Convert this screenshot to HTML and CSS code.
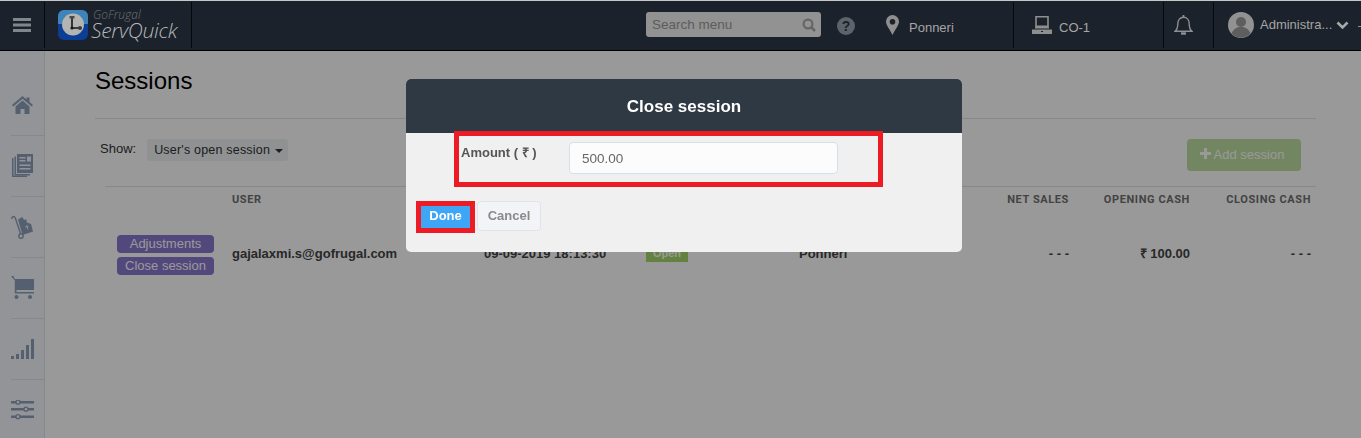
FILE: index.html
```html
<!DOCTYPE html>
<html lang="en">
<head>
    <meta charset="UTF-8">
    <meta name="viewport" content="width=device-width, initial-scale=1.0">
    <title>Sessions</title>
    <link rel="stylesheet" href="styles.css">
</head>
<body>
    <header class="topbar">
        <div class="menu-btn">
            <svg width="18" height="14" viewBox="0 0 18 14"><path d="M0 0h18v3H0zM0 5.500h18v3H0zM0 11h18v3H0z" fill="#80868a"/></svg>
        </div>
        <div class="brand">
            <svg class="brand-icon" width="30" height="30" viewBox="0 0 30 30">
                <rect width="30" height="30" rx="6" fill="#0b3f96"/>
                <path d="M6 0h18a6 6 0 0 1 6 6v8H0V6a6 6 0 0 1 6-6z" fill="#3f84b8"/>
                <circle cx="15" cy="14.500" r="11" fill="#b4b4b2"/>
                <path d="M14 8v10h7" stroke="#15181c" stroke-width="1.600" fill="none"/>
                <path d="M11.500 6h5v2.500h-5z" fill="#4a4a4a"/>
                <circle cx="14" cy="18" r="1.600" fill="#15181c"/>
                <circle cx="22" cy="18" r="2" fill="#3c3c3c"/>
            </svg>
            <div class="brand-text">
                <span class="brand-top">GoFrugal</span>
                <span class="brand-name">ServQuick</span>
            </div>
        </div>
        <div class="top-right">
            <div class="search">
                <span>Search menu</span>
                <svg width="14" height="14" viewBox="0 0 14 14"><circle cx="6" cy="6" r="4.400" fill="none" stroke="#666" stroke-width="2.200"/><path d="M9 9l4 4" stroke="#666" stroke-width="2.600"/></svg>
            </div>
            <div class="help">?</div>
            <div class="top-item location">
                <svg width="13" height="20" viewBox="0 0 13 20"><path fill-rule="evenodd" d="M6.500 0a6.500 6.500 0 0 1 6.500 6.500c0 4-4 8-6.500 13.500C4 14.500 0 10.500 0 6.500A6.500 6.500 0 0 1 6.500 0zm0 4a2.800 2.800 0 1 0 0 5.600 2.800 2.800 0 0 0 0-5.600z" fill="#8f8f8f"/></svg>
                <span>Ponneri</span>
            </div>
            <div class="top-item counter">
                <svg width="20" height="18" viewBox="0 0 20 18" fill="none"><path d="M4 .800h12v9.400H4z" stroke="#8f8f8f" stroke-width="1.600"/><path d="M3 11h14v1.500H3z" fill="#8f8f8f"/><path d="M0 13.500h20V18H0z" fill="#8f8f8f"/><path d="M9 15h2v1H9z" fill="#1b222b"/></svg>
                <span>CO-1</span>
            </div>
            <div class="top-item bell">
                <svg width="19" height="20" viewBox="0 0 19 20" fill="none" stroke="#8f8f8f" stroke-width="1.400"><path d="M1 16.300c2.500-2 2.800-4.300 2.800-7.500C3.800 5 6 2.300 9.500 2.300s5.700 2.700 5.700 6.500c0 3.200.3 5.500 2.800 7.500z"/><path d="M9.500 0v2.500" stroke-width="1.800"/><path d="M7 18.500h5" stroke-width="2.400"/></svg>
            </div>
            <div class="top-item user">
                <svg width="26" height="26" viewBox="0 0 26 26"><circle cx="13" cy="13" r="13" fill="#929292"/><circle cx="13" cy="10" r="5" fill="#5e5e5e"/><path d="M3.500 21.500c2-5 5.500-6.500 9.500-6.500s7.500 1.500 9.500 6.500a13 13 0 0 1-19 0z" fill="#5e5e5e"/></svg>
                <span>Administra...</span>
                <svg class="chevron" width="13" height="9" viewBox="0 0 13 9"><path d="M1.500 1.500l5 5 5-5" fill="none" stroke="#a8a8a8" stroke-width="2.600"/></svg>
                <i class="tick"></i>
            </div>
        </div>
    </header>

    <div class="layout">
        <aside class="sidebar">
            <div class="side-item">
                <svg width="21" height="18" viewBox="0 0 21 18"><path d="M10.500 0l4 3.400V1.500h3v4.500L21 9l-1.300 1.500-9.200-7.800-9.200 7.800L0 9z" class="ico"/><path d="M3.500 10.500l7-6 7 6V18h-5v-5h-4v5h-5z" class="ico"/></svg>
            </div>
            <div class="side-item">
                <svg width="21" height="24" viewBox="0 0 21 24"><path d="M0 4h1.500v17.500H15V23H0z" class="ico"/><path d="M2.500 2.500H4V20h14v1.500H2.500z" class="ico"/><path d="M5 0h16v19H5z" class="ico"/><path d="M7.500 3h6v1.500h-6zM7.500 6h6v1.500h-6zM7.500 10.500h11V12h-11zM7.500 14h11v1.500h-11z" class="gap"/><path d="M15 2.500h4v5h-4z" class="gap"/></svg>
            </div>
            <div class="side-item">
                <svg width="22" height="24" viewBox="0 0 22 24" fill="none"><path d="M0.700 4C1 1 3.500 .500 4.500 3.500l5 15" class="ico-line"/><circle cx="10" cy="21" r="2.200" class="ico-line"/><path d="M7 4.500L11.500 2 13 5l2-.800 1 2-1 .800 5 2 2 7.500-10.500 3.500z" class="ico"/><path d="M15.500 10.500l1.500 4M14.500 12l3-1" stroke="#f3f7fc" stroke-width="1"/></svg>
            </div>
            <div class="side-item">
                <svg width="23" height="23" viewBox="0 0 23 23"><path d="M0 0h2.500l1.200 3H23v11H5.500v2H23v1.500H3.800V4.500z" class="ico"/><circle cx="5.500" cy="21" r="2" class="ico"/><circle cx="19" cy="21" r="2" class="ico"/></svg>
            </div>
            <div class="side-item">
                <svg width="23" height="20" viewBox="0 0 23 20"><path d="M0 17h3v3H0zM5 15h3v5H5zM10 11h3v9h-3zM15 6h3v14h-3zM20 0h3v20h-3z" class="ico"/></svg>
            </div>
            <div class="side-item">
                <svg width="23" height="20" viewBox="0 0 23 20"><path d="M0 1h23v2.400H0zM0 8h23v2.400H0zM0 15.500h23v2.400H0z" class="ico"/><g class="knob"><circle cx="7" cy="2.200" r="2"/><circle cx="15" cy="9.200" r="2"/><circle cx="7" cy="16.700" r="2"/></g></svg>
            </div>
        </aside>

        <main class="content">
            <h1 class="page-title">Sessions</h1>
            <div class="toolbar">
                <div class="show-filter">
                    <span class="show-label">Show:</span>
                    <span class="dropdown">User's open session <i class="caret"></i></span>
                </div>
                <span class="add-btn">
                    <svg width="11" height="11" viewBox="0 0 11 11"><path d="M4 0h3v4h4v3H7v4H4V7H0V4h4z" fill="#fff"/></svg>
                    Add session
                </span>
            </div>
            <div class="sessions">
                <div class="row head">
                    <div></div>
                    <div>USER</div>
                    <div></div>
                    <div></div>
                    <div></div>
                    <div class="num">NET SALES</div>
                    <div class="num">OPENING CASH</div>
                    <div class="num">CLOSING CASH</div>
                </div>
                <div class="row body">
                    <div class="actions">
                        <span class="tag">Adjustments</span>
                        <span class="tag">Close session</span>
                    </div>
                    <div class="strong">gajalaxmi.s@gofrugal.com</div>
                    <div class="strong">09-09-2019 18:13:30</div>
                    <div><span class="status">Open</span></div>
                    <div class="strong">Ponneri</div>
                    <div class="num strong">- - -</div>
                    <div class="num strong">₹ 100.00</div>
                    <div class="num strong">- - -</div>
                </div>
            </div>
        </main>
    </div>

    <div class="backdrop"></div>

    <div class="modal">
        <div class="modal-head">Close session</div>
        <div class="modal-body">
            <div class="field mark">
                <label>Amount ( ₹ )</label>
                <div class="input">500.00</div>
            </div>
            <div class="modal-actions">
                <span class="done mark">Done</span>
                <span class="cancel">Cancel</span>
            </div>
        </div>
    </div>
</body>
</html>
```

FILE: styles.css
```css
* { margin: 0; padding: 0; box-sizing: border-box; }
html, body { height: 100%; overflow: hidden; }
body {
    background: #fff;
    font-family: "Liberation Sans", Arial, sans-serif;
    font-size: 13px;
    color: #333;
}

/* top bar sits over the backdrop, colours here are the final ones */
.topbar {
    position: relative;
    z-index: 2;
    height: 51px;
    background: #1b222b;
    border-top: 1px solid #c8c8c8;
    border-bottom: 1px solid #000;
    display: flex;
    color: #a6a6a6;
}
.menu-btn {
    width: 45px;
    display: flex;
    align-items: center;
    justify-content: center;
    border-right: 1px solid #05070a;
    margin: 1px 0 2px;
}
.brand {
    width: 147px;
    display: flex;
    align-items: center;
    gap: 3px;
    padding: 0 0 3px 13px;
    border-right: 1px solid #05070a;
    margin: 1px 0 2px;
}
.brand-icon { margin-top: 2px; }
.brand-text { display: flex; flex-direction: column; font-style: italic; font-family: "Open Sans", sans-serif; font-weight: 300; }
.brand-top { font-size: 12px; line-height: 11px; margin-left: 2px; color: #6f7377; margin-top: 3px; }
.brand-name { font-size: 21px; line-height: 21px; letter-spacing: -.3px; color: #b4b6b8; }
.top-right { margin-left: auto; display: flex; align-items: stretch; }
.search {
    width: 175px;
    height: 25px;
    margin-top: 11px;
    padding: 0 5px 0 6px;
    background: #929292;
    border-radius: 3px;
    display: flex;
    align-items: center;
    justify-content: space-between;
    color: #5c5c5c;
    font-size: 13.5px;
}
.help {
    width: 18px;
    height: 18px;
    margin: 16px 0 0 16px;
    border-radius: 50%;
    background: #5d636b;
    color: #1b222b;
    font-weight: bold;
    font-size: 14px;
    line-height: 18px;
    text-align: center;
}
.top-item {
    display: flex;
    align-items: center;
    margin: 1px 0 2px;
    font-size: 13px;
    border-right: 1px solid #05070a;
}
.location { width: 159px; padding-left: 31px; gap: 10px; }
.location span { margin-top: 4px; }
.counter { width: 150px; padding-left: 18px; gap: 7px; }
.counter span { margin-top: 4px; }
.bell { width: 50px; padding-left: 10px; }
.user { width: 147px; padding-left: 14px; gap: 6px; border-right: 0; }
.user span { width: 71px; white-space: nowrap; margin-top: -1px; }
.chevron { margin-left: -1px; }
.tick { width: 3px; height: 1px; margin: 3px 0 0 3px; background: #8f8f8f; }

/* page */
.layout { display: flex; height: 387px; }
.sidebar {
    width: 45px;
    flex: none;
    background: #f3f7fc;
    border-right: 1px solid #dfe4ea;
    padding-top: 23px;
}
.side-item {
    height: 61px;
    display: flex;
    align-items: center;
    justify-content: center;
    position: relative;
}
.side-item + .side-item::before {
    content: "";
    position: absolute;
    top: 0;
    left: 11px;
    right: 0;
    border-top: 1px solid #dfe4ea;
}
.ico { fill: #8da0b9; }
.ico-line { stroke: #8da0b9; stroke-width: 1.4; }
.gap { fill: #f3f7fc; }
.knob circle { fill: #f3f7fc; stroke: #8da0b9; stroke-width: 1.3; }
.content { flex: 1; padding: 16px 45px 0 50px; }
.page-title {
    font-size: 24px;
    font-weight: normal;
    line-height: 28px;
    color: #000;
    height: 52px;
    border-bottom: 1px solid #e1e3e6;
}
.toolbar {
    display: flex;
    justify-content: space-between;
    padding: 20px 15px 0 5px;
    height: 67px;
}
.show-filter { display: flex; gap: 11px; align-items: flex-start; }
.show-label { font-size: 13px; line-height: 19px; }
.dropdown {
    height: 22px;
    width: 141px;
    background: #f0f2f6;
    border-radius: 3px;
    padding-left: 7px;
    line-height: 22px;
    font-size: 12.5px;
    letter-spacing: .2px;
    color: #333;
    white-space: nowrap;
}
.caret {
    display: inline-block;
    border: 4px solid transparent;
    border-top-color: #333;
    border-bottom: 0;
    vertical-align: middle;
    margin-left: 1px;
}
.add-btn {
    width: 114px;
    height: 32px;
    padding-right: 4px;
    background: #bfdfa2;
    color: #fff;
    border-radius: 4px;
    text-align: center;
    line-height: 31px;
    font-size: 13px;
}
.sessions { margin-left: 10px; border-top: 1px solid #e1e3ea; }
.row {
    display: grid;
    grid-template-columns: 127px 252px 162px 153px 1fr 120px 121px 121px;
    padding-right: 5px;
}
.head {
    padding-top: 6px;
    height: 41px;
    font-family: Roboto, "Liberation Sans", sans-serif;
    font-size: 11px;
    font-weight: 700;
    letter-spacing: .6px;
    color: #707070;
}
.head > div { line-height: 13px; }
.body { align-items: center; height: 50px; }
.num { text-align: right; }
.strong { font-weight: bold; font-size: 13px; color: #444; }
.actions { display: flex; flex-direction: column; gap: 4px; padding: 4px 18px 0 12px; }
.tag {
    height: 18px;
    background: #8a78cf;
    border-radius: 4px;
    color: #fff;
    font-size: 13px;
    line-height: 17px;
    text-align: center;
}
.status {
    display: inline-block;
    width: 42px;
    height: 17px;
    background: #a6d96c;
    color: #fff;
    font-weight: bold;
    font-size: 11px;
    line-height: 17px;
    text-align: center;
}

.backdrop { position: fixed; top: 0; left: 0; right: 0; bottom: 0; background: rgba(0, 0, 0, .4); }

/* dialog */
.modal {
    position: fixed;
    z-index: 3;
    top: 79px;
    left: 406px;
    width: 556px;
    height: 173px;
    background: #f0f0f0;
    border-radius: 5px;
    overflow: hidden;
}
.modal-head {
    height: 54px;
    background: #2f3944;
    color: #fff;
    font-weight: bold;
    font-size: 17px;
    line-height: 55px;
    text-align: center;
}
.mark { outline: 5px solid #ed1c24; outline-offset: -5px; }
.modal-body { position: relative; }
.field {
    position: absolute;
    top: -2px;
    left: 48px;
    width: 429px;
    height: 56px;
    padding: 11px 0 0 7px;
    display: flex;
}
.field label { width: 108px; padding-top: 2px; font-weight: bold; font-size: 13px; color: #555; line-height: 18px; }
.input {
    width: 269px;
    height: 32px;
    background: #fcfcfc;
    border: 1px solid #d5dfe9;
    border-radius: 4px;
    padding-left: 12px;
    line-height: 31px;
    font-size: 13.5px;
    color: #666;
}
.modal-actions {
    position: absolute;
    top: 68px;
    left: 10px;
    display: flex;
    gap: 2px;
    align-items: flex-start;
}
.done {
    width: 59px;
    height: 32px;
    background: #3fa5f5;
    color: #fff;
    font-weight: bold;
    font-size: 13px;
    line-height: 29px;
    text-align: center;
}
.cancel {
    width: 64px;
    height: 30px;
    background: #f3f4f8;
    border: 1px solid #e2e3e8;
    border-radius: 4px;
    color: #8a8a8a;
    font-weight: bold;
    font-size: 13px;
    line-height: 27px;
    text-align: center;
}
```
